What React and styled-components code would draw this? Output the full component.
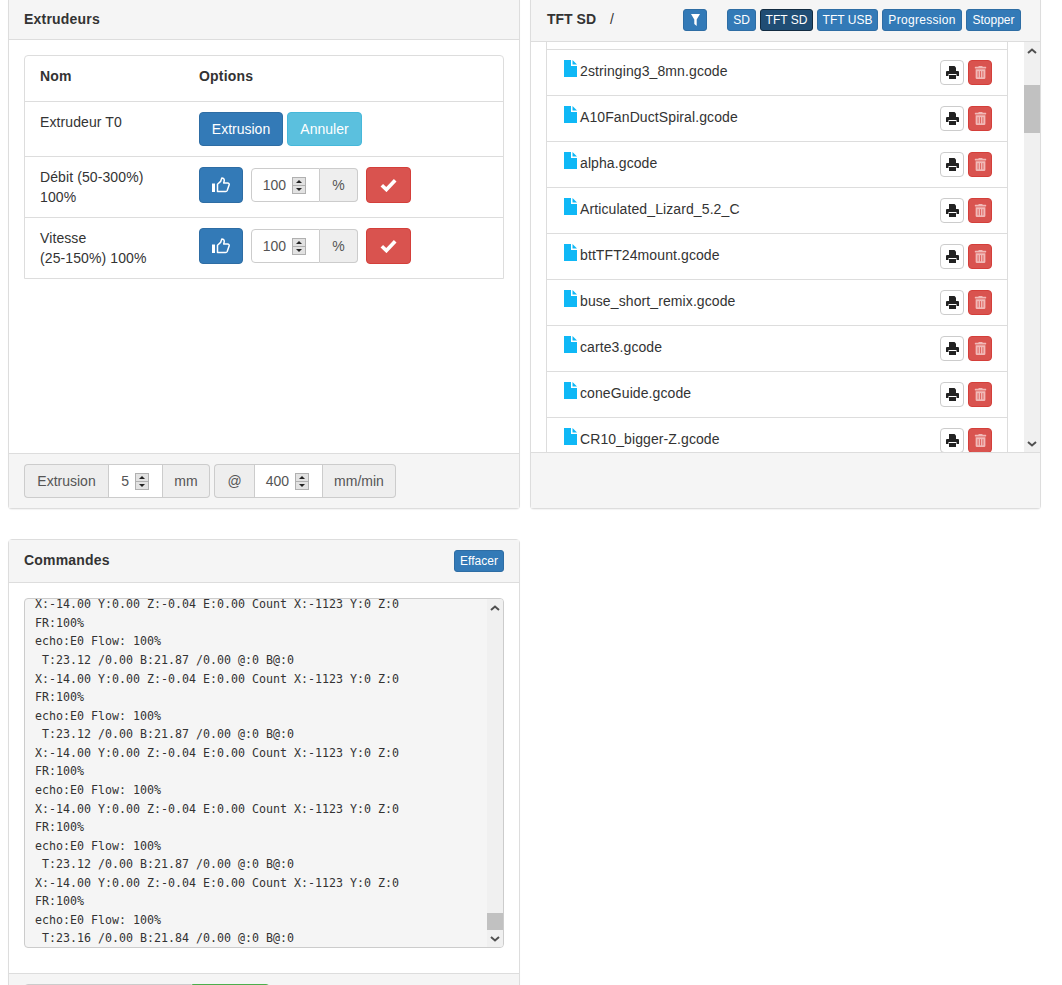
import React from 'react';
import styled, { createGlobalStyle } from 'styled-components';
import { FaTrashAlt } from 'react-icons/fa';

const GlobalStyle = createGlobalStyle`
  html, body {
    margin: 0;
    height: 985px;
    overflow: hidden;
    background: #fff;
  }
  body {
    font-family: "Liberation Sans", Arial, sans-serif;
    font-size: 14px;
    line-height: 20px;
    color: #333;
  }
  * { box-sizing: border-box; }
`;

const Page = styled.div`
  width: 1062px;
  height: 985px;
  padding-left: 8px;
  overflow: hidden;
`;

const TopRow = styled.div`
  display: flex;
  gap: 10px;
`;

const Panel = styled.section`
  display: flex;
  flex-direction: column;
  width: ${props => props.$width || 512}px;
  height: ${props => props.$height}px;
  background: #fff;
  border: 1px solid #ddd;
  border-top: ${props => props.$clipped ? 'none' : '1px solid #ddd'};
  border-radius: ${props => props.$clipped ? '0 0 4px 4px' : '4px'};
  box-shadow: 0 1px 1px rgba(0, 0, 0, 0.05);
`;

const CommandPanel = styled(Panel)`
  margin-top: 30px;
`;

const PanelHeader = styled.header`
  display: flex;
  align-items: center;
  flex: none;
  height: ${props => props.$height}px;
  padding: 0 15px ${props => props.$lift || 0}px ${props => props.$left || 15}px;
  background: #f5f5f5;
  border-bottom: 1px solid #ddd;
`;

const Title = styled.h3`
  margin: 0 0 2px;
  font-size: 14px;
  font-weight: 700;
  letter-spacing: ${props => props.$tight ? 0 : 0.2}px;
`;

const Path = styled.span`
  width: 73px;
  margin: 0 0 2px 14px;
`;

const HeaderGroup = styled.div`
  display: flex;
  gap: 4px;
  margin-left: 20px;
`;

const PanelBody = styled.div`
  flex: ${props => props.$basis ? `0 0 ${props.$basis}px` : 1};
  min-height: 0;
  padding: 15px;
`;

const PanelFooter = styled.footer`
  display: flex;
  flex: none;
  gap: 4px;
  height: ${props => props.$height}px;
  padding: 10px 15px;
  background: #f5f5f5;
  border-top: 1px solid #ddd;
`;

const Table = styled.div`
  border: 1px solid #ddd;
  border-radius: 4px 4px 0 0;
`;

const Row = styled.div`
  display: grid;
  grid-template-columns: 159px 1fr;
  padding: 10px 15px;
  min-height: ${props => props.$head ? 45 : 0}px;
  border-top: ${props => props.$head ? 'none' : '1px solid #ddd'};
`;

const HeadCell = styled.div`
  font-weight: 700;
  letter-spacing: 0.2px;
`;

const LabelCell = styled.div`
  letter-spacing: 0.1px;
`;

const Options = styled.div`
  display: flex;
  align-items: flex-start;
`;

const colours = {
  primary: ['#337ab7', '#2e6da4', '#fff'],
  active: ['#204d74', '#122b40', '#fff'],
  info: ['#5bc0de', '#46b8da', '#fff'],
  danger: ['#d9534f', '#d43f3a', '#fff'],
  plain: ['#fff', '#ccc', '#222'],
};

const Button = styled.button`
  display: inline-flex;
  align-items: center;
  justify-content: center;
  flex: none;
  width: ${props => props.$w}px;
  height: ${props => props.$h}px;
  margin: 0 ${props => props.$mr || 0}px 0 ${props => props.$ml || 0};
  padding: 0;
  font-family: inherit;
  font-size: ${props => props.$size || 14}px;
  letter-spacing: ${props => props.$spacing || 0}px;
  color: ${props => colours[props.$kind][2]};
  background: ${props => colours[props.$kind][0]};
  border: 1px solid ${props => colours[props.$kind][1]};
  border-radius: ${props => props.$radius || 4}px;
`;

const InputGroup = styled.div`
  display: flex;
  flex: none;
  width: ${props => props.$w}px;
  height: 34px;
  margin: ${props => props.$margin || 0};
  color: #555;
`;

const Addon = styled.span`
  display: flex;
  align-items: center;
  justify-content: center;
  flex: ${props => props.$grow ? 1 : 'none'};
  width: ${props => props.$w}px;
  background: #eee;
  border: 1px solid #ccc;
  border-left-width: ${props => props.$first ? 1 : 0}px;
  border-right-width: ${props => props.$last ? 1 : 0}px;
  border-radius: ${props => props.$first ? '4px 0 0 4px' : props.$last ? '0 4px 4px 0' : '0'};
`;

const NumberBox = styled.span`
  display: flex;
  align-items: center;
  justify-content: flex-end;
  flex: none;
  gap: 6px;
  width: ${props => props.$w}px;
  padding-right: 13px;
  background: #fff;
  border: 1px solid #ccc;
  border-radius: ${props => props.$first ? '4px 0 0 4px' : '0'};
`;

const Spin = styled.span`
  display: flex;
  flex-direction: column;
  width: 14px;
  height: 17px;
  background: #e2e2e2;
  border: 1px solid #b0b0b0;
`;

const SpinPart = styled.span`
  display: flex;
  align-items: center;
  justify-content: center;
  flex: 1;
  border-top: ${props => props.$down ? '1px solid #b0b0b0' : 'none'};
  &::before {
    content: "";
    border-left: 3px solid transparent;
    border-right: 3px solid transparent;
    ${props => props.$down ? 'border-top: 3px solid #222;' : 'border-bottom: 3px solid #222;'}
  }
`;

const FileArea = styled.div`
  display: flex;
  flex: 1;
  min-height: 0;
  padding-left: 15px;
`;

const FileList = styled.ul`
  flex: none;
  width: 462px;
  height: 100%;
  margin: 0 16px 0 0;
  padding: 7px 0 0;
  list-style: none;
  overflow: hidden;
  border-left: 1px solid #ddd;
  border-right: 1px solid #ddd;
`;

const FileRow = styled.li`
  display: flex;
  align-items: flex-start;
  height: 46px;
  padding: 10px 15px 0 17px;
  border-top: 1px solid #ddd;
`;

const FileName = styled.span`
  flex: 1;
  margin: 1px 0 0 3px;
  letter-spacing: 0.1px;
`;

const FileGlyph = styled.svg`
  flex: none;
  width: 13px;
  height: 17px;
`;

const FileActions = styled.div`
  display: flex;
  gap: 4px;
`;

const Scrollbar = styled.div`
  display: flex;
  flex-direction: column;
  flex: none;
  width: 16px;
  height: 100%;
  background: #f0f0f0;
`;

const ScrollArrow = styled.span`
  display: flex;
  align-items: center;
  justify-content: center;
  flex: none;
  height: 17px;
  color: #505050;
`;

const ScrollSpace = styled.span`
  flex: ${props => props.$fixed ? `0 0 ${props.$fixed}px` : 1};
  min-height: 0;
`;

const ScrollThumb = styled.span`
  flex: none;
  height: ${props => props.$size}px;
  background: #c1c1c1;
`;

const Console = styled.div`
  display: flex;
  height: 350px;
  overflow: hidden;
  background: #f5f5f5;
  border: 1px solid #ccc;
  border-radius: 4px;
`;

const ConsoleText = styled.pre`
  display: flex;
  flex-direction: column;
  justify-content: flex-end;
  flex: 1;
  min-width: 0;
  margin: 0 0 -1px;
  padding: 0 0 0 10px;
  overflow: hidden;
  font-family: "DejaVu Sans Mono", monospace;
  font-size: 11.63px;
  line-height: 18.57px;
  color: #333;
`;

const GrayInput = styled.div`
  width: 168px;
  height: 34px;
  background: #eee;
  border: 1px solid #ccc;
  border-radius: 4px 0 0 4px;
`;

const GreenButton = styled.div`
  width: 78px;
  height: 34px;
  background: #5cb85c;
  border: 1px solid #4cae4c;
  border-radius: 0 4px 4px 0;
`;

const FooterGroup = styled.div`
  display: flex;
`;

const files = [
  '2stringing3_8mn.gcode',
  'A10FanDuctSpiral.gcode',
  'alpha.gcode',
  'Articulated_Lizard_5.2_C',
  'bttTFT24mount.gcode',
  'buse_short_remix.gcode',
  'carte3.gcode',
  'coneGuide.gcode',
  'CR10_bigger-Z.gcode',
];

const consoleLines = `X:-14.00 Y:0.00 Z:-0.04 E:0.00 Count X:-1123 Y:0 Z:0
FR:100%
echo:E0 Flow: 100%
 T:23.12 /0.00 B:21.87 /0.00 @:0 B@:0
X:-14.00 Y:0.00 Z:-0.04 E:0.00 Count X:-1123 Y:0 Z:0
FR:100%
echo:E0 Flow: 100%
 T:23.12 /0.00 B:21.87 /0.00 @:0 B@:0
X:-14.00 Y:0.00 Z:-0.04 E:0.00 Count X:-1123 Y:0 Z:0
FR:100%
echo:E0 Flow: 100%
X:-14.00 Y:0.00 Z:-0.04 E:0.00 Count X:-1123 Y:0 Z:0
FR:100%
echo:E0 Flow: 100%
 T:23.12 /0.00 B:21.87 /0.00 @:0 B@:0
X:-14.00 Y:0.00 Z:-0.04 E:0.00 Count X:-1123 Y:0 Z:0
FR:100%
echo:E0 Flow: 100%
 T:23.16 /0.00 B:21.84 /0.00 @:0 B@:0`;

const Chevron = ({ down }) => (
  <svg width="10" height="6" viewBox="0 0 10 6">
    <path
      d={down ? 'M1 1l4 3.5L9 1' : 'M1 5l4-3.5L9 5'}
      fill="none"
      stroke="currentColor"
      strokeWidth="2"
    />
  </svg>
);

const Spinner = () => (
  <Spin>
    <SpinPart />
    <SpinPart $down />
  </Spin>
);

const FileIcon = () => (
  <FileGlyph viewBox="0 0 13 17">
    <path d="M0 0h7v6h6v11H0z" fill="#0fb8f6" />
    <path d="M8.5 0L13 4.5H8.5z" fill="#0fb8f6" />
  </FileGlyph>
);

const ThumbIcon = () => (
  <svg width="18" height="16" viewBox="0 0 18 16">
    <rect x="0" y="6.5" width="3" height="8.5" fill="#fff" />
    <path
      d="M5.5 14.5V7.2L8.6 4.4 9.8 1c1.7 0 2.7 1.1 2.4 2.8L11.7 6h3.9c1.2 0 1.9 1 1.5 2.1l-1.9 5.4c-.3.7-.8 1-1.5 1z"
      fill="none"
      stroke="#fff"
      strokeWidth="1.5"
      strokeLinejoin="round"
    />
  </svg>
);

const CheckIcon = () => (
  <svg width="17" height="14" viewBox="0 0 17 14">
    <path d="M1.8 7.2l4.6 4.4L15.2 2.2" fill="none" stroke="#fff" strokeWidth="3.6" />
  </svg>
);

const PrintIcon = () => (
  <svg width="13" height="13" viewBox="0 0 13 13">
    <path d="M3 0h5.5L10 1.5V5H3z" fill="#222" />
    <path
      fillRule="evenodd"
      d="M1 5h11a1 1 0 0 1 1 1v4h-2.5V8h-8v2H0V6a1 1 0 0 1 1-1z"
      fill="#222"
    />
    <rect x="3" y="9" width="7" height="4" fill="#222" />
  </svg>
);

const FilterIcon = () => (
  <svg width="9" height="12" viewBox="0 0 9 12">
    <path d="M0 0h9L5.7 5.5V12L3.3 10V5.5z" fill="#fff" />
  </svg>
);

const RateControls = () => (
  <Options>
    <Button $kind="primary" $w={44} $h={36} $mr={8}>
      <ThumbIcon />
    </Button>
    <InputGroup $w={107} $margin="1px 8px 0 0">
      <NumberBox $first $w={69}>
        100
        <Spinner />
      </NumberBox>
      <Addon $grow $last>%</Addon>
    </InputGroup>
    <Button $kind="danger" $w={45} $h={36}>
      <CheckIcon />
    </Button>
  </Options>
);

export default function App() {
  return (
    <Page>
      <GlobalStyle />
      <TopRow>
        <Panel $clipped $height={509}>
          <PanelHeader $height={40}>
            <Title>Extrudeurs</Title>
          </PanelHeader>
          <PanelBody>
            <Table>
              <Row $head>
                <HeadCell>Nom</HeadCell>
                <HeadCell>Options</HeadCell>
              </Row>
              <Row>
                <LabelCell>Extrudeur T0</LabelCell>
                <Options>
                  <Button $kind="primary" $w={84} $h={34} $mr={4}>Extrusion</Button>
                  <Button $kind="info" $w={75} $h={34}>Annuler</Button>
                </Options>
              </Row>
              <Row>
                <LabelCell>Débit (50-300%)<br />100%</LabelCell>
                <RateControls />
              </Row>
              <Row>
                <LabelCell>Vitesse<br />(25-150%) 100%</LabelCell>
                <RateControls />
              </Row>
            </Table>
          </PanelBody>
          <PanelFooter $height={55}>
            <InputGroup $w={186}>
              <Addon $first $w={84}>Extrusion</Addon>
              <NumberBox $w={55}>
                5
                <Spinner />
              </NumberBox>
              <Addon $grow $last>mm</Addon>
            </InputGroup>
            <InputGroup $w={182}>
              <Addon $first $w={40}>@</Addon>
              <NumberBox $w={69}>
                400
                <Spinner />
              </NumberBox>
              <Addon $grow $last>mm/min</Addon>
            </InputGroup>
          </PanelFooter>
        </Panel>

        <Panel $clipped $width={511} $height={509}>
          <PanelHeader $height={42} $left={16} $lift={1}>
            <Title $tight>TFT SD</Title>
            <Path>/</Path>
            <Button $kind="primary" $w={24} $h={22} $radius={3}>
              <FilterIcon />
            </Button>
            <HeaderGroup>
              <Button $kind="primary" $w={29} $h={22} $size={12} $radius={3}>SD</Button>
              <Button $kind="active" $w={53} $h={22} $size={12} $radius={3}>TFT SD</Button>
              <Button $kind="primary" $w={61} $h={22} $size={12} $radius={3}>TFT USB</Button>
              <Button $kind="primary" $w={80} $h={22} $size={12} $radius={3} $spacing={0.3}>Progression</Button>
              <Button $kind="primary" $w={55} $h={22} $size={12} $radius={3}>Stopper</Button>
            </HeaderGroup>
          </PanelHeader>
          <FileArea>
            <FileList>
              {files.map(name => (
                <FileRow key={name}>
                  <FileIcon />
                  <FileName>{name}</FileName>
                  <FileActions>
                    <Button $kind="plain" $w={24} $h={25}>
                      <PrintIcon />
                    </Button>
                    <Button $kind="danger" $w={24} $h={25} $size={13}>
                      <FaTrashAlt color="#f1b9b7" />
                    </Button>
                  </FileActions>
                </FileRow>
              ))}
            </FileList>
            <Scrollbar>
              <ScrollArrow><Chevron /></ScrollArrow>
              <ScrollSpace $fixed={26} />
              <ScrollThumb $size={48} />
              <ScrollSpace />
              <ScrollArrow><Chevron down /></ScrollArrow>
            </Scrollbar>
          </FileArea>
          <PanelFooter $height={56} />
        </Panel>
      </TopRow>

      <CommandPanel $height={600}>
        <PanelHeader $height={43}>
          <Title>Commandes</Title>
          <Button $kind="primary" $w={50} $h={22} $size={12} $radius={3} $ml="auto">
            Effacer
          </Button>
        </PanelHeader>
        <PanelBody $basis={390}>
          <Console>
            <ConsoleText>{consoleLines}</ConsoleText>
            <Scrollbar>
              <ScrollArrow><Chevron /></ScrollArrow>
              <ScrollSpace />
              <ScrollThumb $size={17} />
              <ScrollArrow><Chevron down /></ScrollArrow>
            </Scrollbar>
          </Console>
        </PanelBody>
        <PanelFooter $height={56}>
          <FooterGroup>
            <GrayInput />
            <GreenButton />
          </FooterGroup>
        </PanelFooter>
      </CommandPanel>
    </Page>
  );
}
